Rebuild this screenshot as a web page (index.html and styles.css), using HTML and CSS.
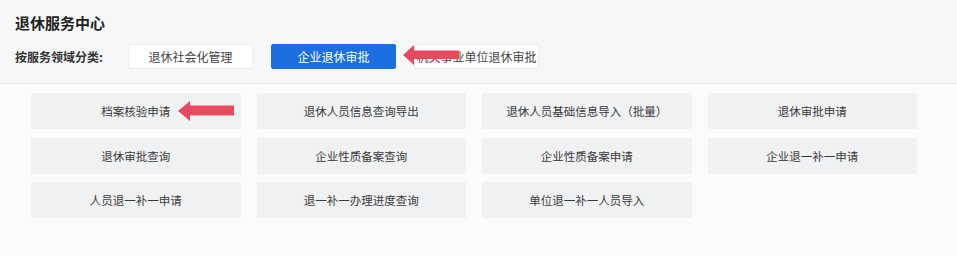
FILE: index.html
```html
<!DOCTYPE html>
<html lang="zh-CN">
<head>
    <meta charset="UTF-8">
    <meta name="viewport" content="width=device-width, initial-scale=1.0">
    <title>退休服务中心</title>
    <link rel="stylesheet" href="styles.css">
</head>
<body>
    <div class="service-header">
        <div class="service-title">退休服务中心</div>
        <div class="category-row">
            <span class="category-label">按服务领域分类:</span>
            <div class="category-btn">退休社会化管理</div>
            <div class="category-btn category-btn-active">企业退休审批</div>
            <div class="category-btn">机关事业单位退休审批</div>
            <svg class="pointer-arrow pointer-arrow-top" width="56" height="20" viewBox="0 0 56 20">
                <polygon points="0,10 11,0 11,5.5 56,5.5 56,14 11,14 11,20" fill="#e54a5f"/>
            </svg>
        </div>
    </div>

    <div class="tile-grid">
        <div class="tile">档案核验申请
            <svg class="pointer-arrow pointer-arrow-tile" width="56" height="20" viewBox="0 0 56 20">
                <polygon points="0,10 12,0 12,4.5 56,4.5 56,14.5 12,14.5 12,20" fill="#e54a5f"/>
            </svg>
        </div>
        <div class="tile">退休人员信息查询导出</div>
        <div class="tile">退休人员基础信息导入（批量）</div>
        <div class="tile">退休审批申请</div>
        <div class="tile">退休审批查询</div>
        <div class="tile">企业性质备案查询</div>
        <div class="tile">企业性质备案申请</div>
        <div class="tile">企业退一补一申请</div>
        <div class="tile">人员退一补一申请</div>
        <div class="tile">退一补一办理进度查询</div>
        <div class="tile">单位退一补一人员导入</div>
    </div>
</body>
</html>
```

FILE: styles.css
```css
* {
    box-sizing: border-box;
}
body {
    margin: 0;
    height: 256px;
    background-color: #fafbfc;
    font-family: "Noto Sans CJK SC", "Noto Sans", sans-serif;
    color: #333;
}

/* шапка */
.service-header {
    background-color: #f6f7f8;
    border-bottom: 1px solid #e9eaec;
    padding: 12px 15px 14px;
}
.service-title {
    font-size: 15px;
    font-weight: bold;
    line-height: 22px;
    color: #222;
}
.category-row {
    position: relative;
    display: flex;
    align-items: center;
    margin-top: 10px;
    height: 25px;
}
.category-label {
    width: 113px;
    font-size: 12px;
    font-weight: bold;
    color: #333;
}
.category-btn {
    width: 125px;
    height: 25px;
    margin-right: 18px;
    background-color: #fff;
    border: 1px solid #ececec;
    border-radius: 2px;
    font-size: 12px;
    line-height: 23px;
    text-align: center;
    white-space: nowrap;
    overflow: hidden;
    color: #444;
}
.category-btn-active {
    background-color: #1c6fe0;
    border-color: #1c6fe0;
    color: #fff;
}
.pointer-arrow {
    position: absolute;
    display: block;
}
.pointer-arrow-top {
    left: 388px;
    top: 1px;
}

/* плитки */
.tile-grid {
    display: grid;
    grid-template-columns: repeat(4, 209.5px);
    grid-auto-rows: 36px;
    gap: 8.5px 16px;
    padding: 9px 0 0 31px;
}
.tile {
    position: relative;
    background-color: #f0f1f3;
    font-size: 11.5px;
    line-height: 36px;
    text-align: center;
    color: #3a3a3a;
}
.pointer-arrow-tile {
    left: 147px;
    top: 8px;
}
```
